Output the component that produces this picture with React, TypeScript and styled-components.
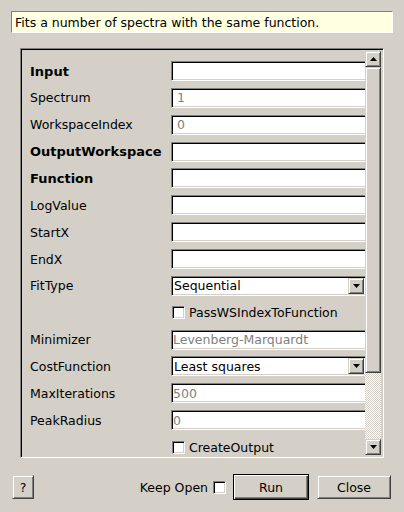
import React from "react";
import styled, { createGlobalStyle, css } from "styled-components";

const GlobalStyle = createGlobalStyle`
  html, body { margin: 0; padding: 0; background: #d4d0c8; }
  body { font-family: "DejaVu Sans", "Liberation Sans", sans-serif; font-size: 12.5px; color: #000; }
  * { box-sizing: border-box; }
`;

const sunken = css`
  border-style: solid;
  border-width: 1px;
  border-color: #808080 #fff #fff #808080;
  box-shadow: inset 1px 1px 0 #000, inset -1px -1px 0 #d4d0c8;
`;

const raised = css`
  border-style: solid;
  border-width: 1px;
  border-color: #d4d0c8 #404040 #404040 #d4d0c8;
  box-shadow: inset 1px 1px 0 #fff, inset -1px -1px 0 #808080;
  background: #d4d0c8;
`;

const Page = styled.div`
  width: 404px;
  height: 512px;
  display: flex;
  flex-direction: column;
  background: #d4d0c8;
  overflow: hidden;
`;

const Description = styled.div`
  margin: 11px 11px 0;
  height: 22px;
  background: #ffffe1;
  border: 1px solid;
  border-color: #808080 #fff #fff #808080;
  padding-left: 3px;
  line-height: 21px;
  white-space: nowrap;
`;

const Frame = styled.div`
  margin: 15px 20px 0;
  height: 410px;
  ${sunken};
  padding: 2px;
  display: flex;
`;

const Viewport = styled.div`
  flex: 1;
  overflow: hidden;
  padding: 10px 0 0 7px;
`;

const Grid = styled.div`
  display: grid;
  grid-template-columns: 141px 196px;
  grid-auto-rows: 20px;
  row-gap: 6.86px;
`;

const Label = styled.div<{ $bold?: boolean }>`
  display: flex;
  align-items: center;
  white-space: nowrap;
  font-weight: ${(p) => (p.$bold ? "bold" : "normal")};
  font-size: ${(p) => (p.$bold ? "13px" : "12.5px")};
`;

const TextField = styled.div<{ $disabled?: boolean; $indent?: number }>`
  ${sunken};
  background: #fff;
  color: ${(p) => (p.$disabled ? "#808080" : "#000")};
  padding-left: ${(p) => p.$indent ?? 2}px;
  display: flex;
  align-items: center;
  white-space: nowrap;
  overflow: hidden;
`;

const Combo = styled.div`
  ${sunken};
  background: #fff;
  padding: 2px;
  display: flex;
  align-items: center;
`;

const ComboText = styled.div`
  flex: 1;
  white-space: nowrap;
`;

const ArrowButton = styled.div`
  width: 16px;
  height: 16px;
  ${raised};
  display: flex;
  align-items: center;
  justify-content: center;
`;

const CheckRow = styled.div`
  grid-column: 2;
  display: flex;
  align-items: center;
  padding-left: 1px;
  gap: 4px;
  white-space: nowrap;
`;

const CheckBox = styled.div`
  width: 13px;
  height: 13px;
  flex: none;
  ${sunken};
  background: #fff;
`;

const Scrollbar = styled.div`
  width: 16px;
  display: flex;
  flex-direction: column;
`;

const ScrollButton = styled.div`
  height: 16px;
  flex: none;
  ${raised};
  display: flex;
  align-items: center;
  justify-content: center;
`;

const Thumb = styled.div`
  height: 306px;
  flex: none;
  ${raised};
`;

const Track = styled.div`
  flex: 1;
  background: repeating-conic-gradient(#fff 0 25%, #d4d0c8 0 50%) 0 0 / 2px 2px;
`;

const BottomRow = styled.div`
  margin: 16px 13px 0 12px;
  height: 26px;
  display: flex;
  align-items: center;
`;

const Button = styled.div<{ $w: number; $default?: boolean }>`
  width: ${(p) => p.$w}px;
  height: 24px;
  ${raised};
  display: flex;
  align-items: center;
  justify-content: center;
  ${(p) =>
    p.$default &&
    css`
      height: 26px;
      border: 1px solid #000;
      box-shadow: inset 1px 1px 0 #fff, inset -1px -1px 0 #404040, inset -2px -2px 0 #808080;
    `}
`;

const Spacer = styled.div`
  flex: 1;
`;

const Gap = styled.div`
  flex: 0 0 8px;
`;

const KeepOpen = styled.div`
  display: flex;
  align-items: center;
  gap: 5px;
  margin-right: 7px;
`;

const Tri = ({ up }: { up?: boolean }) => (
  <svg width="7" height="4" viewBox="0 0 7 4">
    <polygon points={up ? "0,4 7,4 3.5,0" : "0,0 7,0 3.5,4"} fill="#000" />
  </svg>
);

type Row =
  | { kind: "text"; label: string; bold?: boolean; value?: string; disabled?: boolean; indent?: number }
  | { kind: "combo"; label: string; value: string }
  | { kind: "check"; label: string };

const rows: Row[] = [
  { kind: "text", label: "Input", bold: true },
  { kind: "text", label: "Spectrum", value: "1", disabled: true, indent: 5 },
  { kind: "text", label: "WorkspaceIndex", value: "0", disabled: true, indent: 5 },
  { kind: "text", label: "OutputWorkspace", bold: true },
  { kind: "text", label: "Function", bold: true },
  { kind: "text", label: "LogValue" },
  { kind: "text", label: "StartX" },
  { kind: "text", label: "EndX" },
  { kind: "combo", label: "FitType", value: "Sequential" },
  { kind: "check", label: "PassWSIndexToFunction" },
  { kind: "text", label: "Minimizer", value: "Levenberg-Marquardt", disabled: true, indent: 1 },
  { kind: "combo", label: "CostFunction", value: "Least squares" },
  { kind: "text", label: "MaxIterations", value: "500", disabled: true, indent: 1 },
  { kind: "text", label: "PeakRadius", value: "0", disabled: true, indent: 1 },
  { kind: "check", label: "CreateOutput" },
];

export default function App() {
  return (
    <>
      <GlobalStyle />
      <Page>
        <Description>Fits a number of spectra with the same function.</Description>
        <Frame>
          <Viewport>
            <Grid>
              {rows.map((r, i) => {
                if (r.kind === "check") {
                  return (
                    <CheckRow key={i}>
                      <CheckBox />
                      {r.label}
                    </CheckRow>
                  );
                }
                return (
                  <React.Fragment key={i}>
                    <Label $bold={r.kind === "text" && r.bold}>{r.label}</Label>
                    {r.kind === "text" ? (
                      <TextField $disabled={r.disabled} $indent={r.indent}>
                        {r.value ?? ""}
                      </TextField>
                    ) : (
                      <Combo>
                        <ComboText>{r.value}</ComboText>
                        <ArrowButton>
                          <Tri />
                        </ArrowButton>
                      </Combo>
                    )}
                  </React.Fragment>
                );
              })}
            </Grid>
          </Viewport>
          <Scrollbar>
            <ScrollButton>
              <Tri up />
            </ScrollButton>
            <Thumb />
            <Track />
            <ScrollButton>
              <Tri />
            </ScrollButton>
          </Scrollbar>
        </Frame>
        <BottomRow>
          <Button $w={22}>?</Button>
          <Spacer />
          <KeepOpen>
            Keep Open
            <CheckBox />
          </KeepOpen>
          <Button $w={76} $default>
            Run
          </Button>
          <Gap />
          <Button $w={74}>Close</Button>
        </BottomRow>
      </Page>
    </>
  );
}
